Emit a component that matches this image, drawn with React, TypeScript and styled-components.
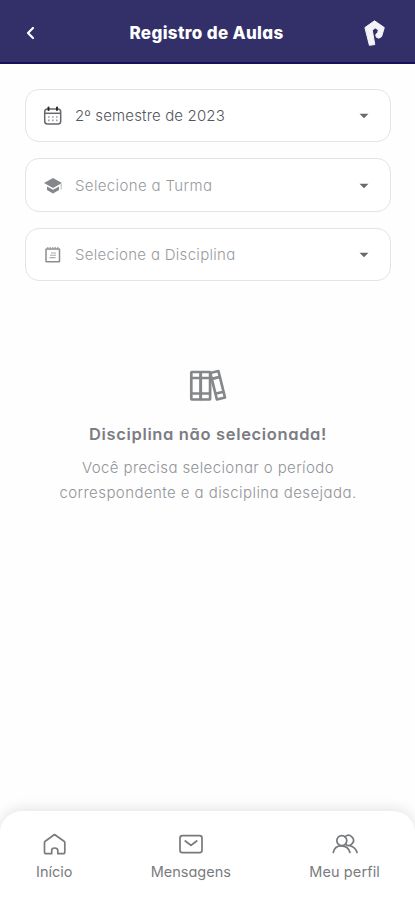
import React from "react";
import styled, { createGlobalStyle } from "styled-components";

const GlobalStyle = createGlobalStyle`
  * { box-sizing: border-box; }
  body {
    margin: 0;
    background: #fefefe;
    font-family: Inter, "Open Sans", sans-serif;
    font-feature-settings: "cv11" 1;
  }
`;

const Screen = styled.div`
  display: flex;
  flex-direction: column;
  height: 900px;
  width: 100%;
  overflow: hidden;
`;

const Header = styled.header`
  display: grid;
  grid-template-columns: 60px 1fr 60px;
  align-items: center;
  height: 64px;
  flex: none;
  background: #332f69;
  border-bottom: 2px solid #18105e;
  color: #fff;
  padding: 3px 0 0;
`;

const HeaderSlot = styled.div<{ $end?: boolean }>`
  display: flex;
  justify-content: ${(p) => (p.$end ? "flex-end" : "flex-start")};
  padding: ${(p) => (p.$end ? "0 29px 0 0" : "0 0 0 25px")};
`;

const Title = styled.h1`
  margin: 0;
  text-align: center;
  white-space: nowrap;
  font-size: 17px;
  line-height: 24px;
  font-weight: 800;
  letter-spacing: 0.35px;
  text-indent: -2px;
`;

const Filters = styled.section`
  display: flex;
  flex-direction: column;
  gap: 16px;
  padding: 24.5px 24px 0 25px;
`;

const Select = styled.button<{ $filled?: boolean }>`
  display: flex;
  align-items: center;
  width: 100%;
  height: 53.5px;
  padding: 2px 21px 0 17px;
  border: 1.5px solid #e2e4e6;
  border-radius: 14px;
  background: #fff;
  color: ${(p) => (p.$filled ? "#53565d" : "#999ba0")};
  font: inherit;
  text-align: left;
`;

const SelectText = styled.span<{ $spacing: number }>`
  flex: 1;
  margin-left: 12px;
  font-size: 15px;
  line-height: 22px;
  font-weight: 300;
  white-space: nowrap;
  letter-spacing: ${(p) => p.$spacing}px;
`;

const Empty = styled.section`
  display: flex;
  flex-direction: column;
  align-items: center;
  padding: 88px 0 0 1px;
  flex: 1;
  text-align: center;
`;

const EmptyTitle = styled.h2`
  margin: 18px 0 0;
  font-size: 16.5px;
  line-height: 26px;
  font-weight: 600;
  letter-spacing: 0.65px;
  color: #7b7d83;
`;

const EmptyLine = styled.p<{ $spacing: number }>`
  margin: 0;
  font-size: 15px;
  line-height: 25px;
  font-weight: 300;
  white-space: nowrap;
  letter-spacing: ${(p) => p.$spacing}px;
  color: #929499;
`;

const EmptyText = styled.div`
  margin-top: 7.5px;
`;

const TabBar = styled.nav`
  display: flex;
  justify-content: space-between;
  height: 89px;
  flex: none;
  padding: 21px 35px 0 36px;
  border-radius: 22px 22px 0 0;
  background: #fff;
  box-shadow: 0 -2px 14px rgba(0, 0, 0, 0.11);
`;

const Tab = styled.a<{ $spacing: number }>`
  display: flex;
  flex-direction: column;
  align-items: center;
  gap: 6px;
  color: #7a7c80;
  font-size: 14.5px;
  line-height: 20px;
  white-space: nowrap;
  letter-spacing: ${(p) => p.$spacing}px;
`;

const BackIcon = () => (
  <svg width="12" height="16" viewBox="0 0 12 16" fill="none" stroke="#fff" strokeWidth="2.2" strokeLinecap="round" strokeLinejoin="round">
    <path d="M8 3 L3 8 L8 13" />
  </svg>
);

const BrandIcon = () => (
  <svg width="22" height="28" viewBox="0 0 22 28">
    <path
      fill="#f3f3f8"
      stroke="#f3f3f8"
      strokeWidth="1"
      strokeLinejoin="round"
      d="M10.5 1.8 L20.3 8.6 L17.6 17.6 Q14.6 20.6 12.2 18 Q10.8 15.2 13.6 13.8 L14.4 10.9 L11 8.8 L8.3 11.4 L10.8 25.6 L5.4 26.3 L0.9 8.6 Z"
    />
  </svg>
);

const CalendarIcon = () => (
  <svg width="20" height="20" viewBox="0 0 20 20" fill="none" stroke="#66686c" strokeWidth="1.5">
    <rect x="1.7" y="3" width="16" height="15" rx="2.8" />
    <path d="M2 7.3 H18" />
    <path d="M5.5 1.4 V4 M14 1.4 V4" stroke="#292a2e" strokeWidth="2" strokeLinecap="round" />
    <path d="M5 11 H15 M5 14.3 H15" strokeDasharray="1.6 2.4" strokeWidth="1.7" stroke="#a0a1a4" />
  </svg>
);

const CapIcon = () => (
  <svg width="20" height="20" viewBox="0 0 20 20" fill="#85878b">
    <path d="M10 2 L19 7 L10 12 L1 7 Z" />
    <path d="M4 10.6 L10 13.7 L16 10.6 V14 L10 17.6 L4 14 Z" />
    <path d="M17.6 8 H18.7 V13.5 H17.6 Z" opacity=".55" />
  </svg>
);

const SubjectIcon = () => (
  <svg width="20" height="20" viewBox="0 0 20 20" fill="none" stroke="#8b8d8f" strokeWidth="1.5">
    <rect x="3" y="4" width="13.5" height="12.8" rx="0.6" />
    <path d="M4 2.8 H15.5" strokeWidth="1" strokeDasharray="1.5 1" />
    <path d="M8 8 H13 M7 10.3 H13 M6.5 12.6 H12.5" strokeWidth="1.1" opacity=".75" />
  </svg>
);

const Caret = () => (
  <svg width="10" height="6" viewBox="0 0 10 6" fill="#686a6c">
    <path d="M0.5 0.7 H9.5 L5 5.3 Z" />
  </svg>
);

const BooksIcon = () => (
  <svg width="38" height="34" viewBox="0 0 38 34" fill="none" stroke="#85878a" strokeWidth="2.7" strokeLinejoin="round">
    <rect x="2.3" y="3" width="9.4" height="27.5" rx="0.4" />
    <rect x="11.7" y="3" width="9.4" height="27.5" rx="0.4" />
    <path d="M2.3 9 H21.1 M2.3 24.5 H21.1" />
    <path d="M21.3 4 L29.4 2 L36 28.5 L27.9 30.5 Z M22.8 9.9 L30.9 7.9 M26.3 24.8 L34.4 22.8" />
  </svg>
);

const HomeIcon = () => (
  <svg width="24" height="24" viewBox="0 0 24 24" fill="none" stroke="#797b7e" strokeWidth="1.7" strokeLinejoin="round">
    <path d="M12.5 2.5 L22.1 9.2 Q22.8 9.7 22.8 10.6 V19.9 Q22.8 21.7 21 21.7 H15.8 V18.6 Q15.8 16 12.5 16 Q9.7 16 9.7 18.6 V21.7 H4.3 Q2.5 21.7 2.5 19.9 V10.6 Q2.5 9.7 3.2 9.2 Z" />
  </svg>
);

const MailIcon = () => (
  <svg width="24" height="24" viewBox="0 0 24 24" fill="none" stroke="#77797c" strokeWidth="1.7" strokeLinecap="round" strokeLinejoin="round">
    <rect x="1" y="3.7" width="22" height="17" rx="2.4" />
    <path d="M6.3 9 L12 13.4 L17.7 9" strokeWidth="1.8" />
  </svg>
);

const PeopleIcon = () => (
  <svg width="26" height="24" viewBox="0 0 26 24" fill="none" stroke="#77797c" strokeWidth="1.7" strokeLinecap="round">
    <circle cx="9.8" cy="8.6" r="5" />
    <path d="M13.2 4.6 A5 5 0 1 1 14 12.8" />
    <path d="M1.3 20.5 C3 11.6 15.5 11.6 18 20.5 M18 13.8 Q23.6 15.3 25 20.5" />
  </svg>
);

const fields = [
  { text: "2º semestre de 2023", icon: <CalendarIcon />, filled: true, spacing: 0.15 },
  { text: "Selecione a Turma", icon: <CapIcon />, filled: false, spacing: 0.37 },
  { text: "Selecione a Disciplina", icon: <SubjectIcon />, filled: false, spacing: 0.3 },
];

const tabs = [
  { label: "Início", icon: <HomeIcon />, spacing: 0 },
  { label: "Mensagens", icon: <MailIcon />, spacing: 0 },
  { label: "Meu perfil", icon: <PeopleIcon />, spacing: 0.12 },
];

export default function App() {
  return (
    <>
      <GlobalStyle />
      <Screen>
        <Header>
          <HeaderSlot><BackIcon /></HeaderSlot>
          <Title>Registro de Aulas</Title>
          <HeaderSlot $end><BrandIcon /></HeaderSlot>
        </Header>
        <Filters>
          {fields.map((f) => (
            <Select key={f.text} $filled={f.filled}>
              {f.icon}
              <SelectText $spacing={f.spacing}>{f.text}</SelectText>
              <Caret />
            </Select>
          ))}
        </Filters>
        <Empty>
          <BooksIcon />
          <EmptyTitle>Disciplina não selecionada!</EmptyTitle>
          <EmptyText>
            <EmptyLine $spacing={0.4}>Você precisa selecionar o período</EmptyLine>
            <EmptyLine $spacing={0.43}>correspondente e a disciplina desejada.</EmptyLine>
          </EmptyText>
        </Empty>
        <TabBar>
          {tabs.map((t) => (
            <Tab key={t.label} $spacing={t.spacing}>
              {t.icon}
              <span>{t.label}</span>
            </Tab>
          ))}
        </TabBar>
      </Screen>
    </>
  );
}
